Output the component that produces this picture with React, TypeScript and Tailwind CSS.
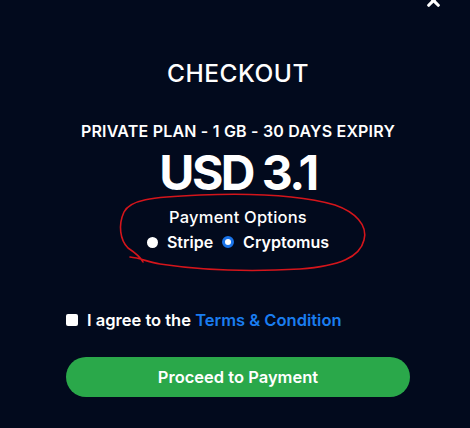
import { X } from "lucide-react";

export default function App() {
  return (
    <div
      className="relative w-[470px] h-[428px] overflow-hidden bg-[#020a1d] text-white"
      style={{ fontFamily: "Inter, 'Noto Sans', sans-serif" }}
    >
      <button className="absolute right-[27px] top-[-9px] text-white">
        <X size={19} strokeWidth={4} />
      </button>

      <div className="flex flex-col items-center pl-[66px] pr-[60px] pt-[59px]">
        <h2 className="text-[24.5px] font-medium leading-[28px] tracking-[0.5px]">CHECKOUT</h2>

        <p className="mt-[34px] text-[16px] font-semibold leading-[20px] tracking-[0.2px]">
          PRIVATE PLAN - 1 GB - 30 DAYS EXPIRY
        </p>
        <p className="mt-[6px] text-[48px] font-bold leading-[52px] tracking-[-2.5px]">USD 3.1</p>

        <p className="mt-[8px] text-[16.5px] font-medium leading-[20px] tracking-[0.2px]">Payment Options</p>
        <div className="mt-[5px] flex items-center text-[16px] font-semibold leading-[20px]">
          <span className="w-[11px] h-[11px] rounded-full bg-white" />
          <span className="ml-[9px]">Stripe</span>
          <span className="ml-[9px] w-[12px] h-[12px] rounded-full bg-white border-[3px] border-[#1a73e8]" />
          <span className="ml-[9px]">Cryptomus</span>
        </div>

        <label className="mt-[58px] self-start flex items-center gap-[9px] text-[16.5px] font-semibold leading-[20px]">
          <span className="w-[12px] h-[12px] bg-white rounded-[2px]" />
          <span>
            I agree to the <span className="text-[#1a7df0]">Terms &amp; Condition</span>
          </span>
        </label>

        <button className="mt-[27px] w-full h-[40px] rounded-full bg-[#2aa84a] text-[16.5px] font-semibold text-white">
          Proceed to Payment
        </button>
      </div>

      <svg className="absolute left-0 top-0 pointer-events-none" width="470" height="428" viewBox="0 0 470 428">
        <path
          d="M124 212 C130 200 150 197 200 195 C250 193 300 195 335 205 C355 212 368 225 364 240 C360 257 340 266 300 269 C250 272 200 270 160 264 C148 262 140 258 130 257 M143 262 C140 256 134 252 128 248 C120 240 118 225 124 212"
          fill="none"
          stroke="#d4151b"
          strokeWidth="1.6"
          strokeLinecap="round"
        />
      </svg>
    </div>
  );
}
